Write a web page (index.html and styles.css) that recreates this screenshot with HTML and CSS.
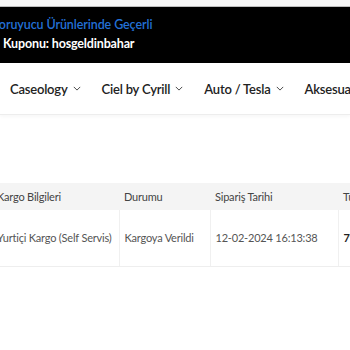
FILE: index.html
```html
<!DOCTYPE html>
<html lang="tr">

    <head>
        <meta charset="UTF-8">
        <meta name="viewport" content="width=device-width, initial-scale=1.0">
        <title>Siparişlerim</title>

        <link rel="stylesheet" href="styles.css">
    </head>

    <body>
        <div class="topstrip"></div>

        <div class="promo">
            <span class="promo-line blue">Koruyucu Ürünlerinde Geçerli</span>
            <span class="promo-line white">Kuponu: hosgeldinbahar</span>
        </div>

        <nav class="menu">
            <a href="#">Caseology <svg class="chev" viewBox="0 0 10 6"><path d="M1 1l4 4 4-4" /></svg></a>
            <a href="#">Ciel by Cyrill <svg class="chev" viewBox="0 0 10 6"><path d="M1 1l4 4 4-4" /></svg></a>
            <a href="#">Auto / Tesla <svg class="chev" viewBox="0 0 10 6"><path d="M1 1l4 4 4-4" /></svg></a>
            <a href="#">Aksesuar</a>
        </nav>

        <main>
            <table class="orders">
                <thead>
                    <tr>
                        <th class="c1">Kargo Bilgileri</th>
                        <th class="c2">Durumu</th>
                        <th class="c3">Sipariş Tarihi</th>
                        <th class="c4">Tutar</th>
                    </tr>
                </thead>
                <tbody>
                    <tr>
                        <td>Yurtiçi Kargo (Self Servis)</td>
                        <td>Kargoya Verildi</td>
                        <td>12-02-2024 16:13:38</td>
                        <td class="price">799,00 TL</td>
                    </tr>
                </tbody>
            </table>
        </main>
    </body>

</html>
```

FILE: styles.css
```css
* {
    box-sizing: border-box;
}

html,
body {
    margin: 0;
    padding: 0;
    width: 100%;
    overflow: hidden;
    background-color: #fff;
    font-family: Lato, 'Open Sans', sans-serif;
}

.topstrip {
    height: 7px;
    background-color: #f7f7f7;
    border-bottom: 1px solid #bdbdbd;
}

.promo {
    height: 56px;
    background-color: #000;
    display: flex;
    flex-direction: column;
    justify-content: center;
    gap: 3px;
    padding-bottom: 2px;
    white-space: nowrap;
}

.promo-line {
    display: block;
    line-height: 16px;
}

.promo-line.blue {
    color: #2370d6;
    font-size: 12.5px;
    font-weight: 600;
    letter-spacing: -0.1px;
    margin-left: -9px;
}

.promo-line.white {
    color: #fff;
    font-size: 12.5px;
    font-weight: 700;
    letter-spacing: -0.15px;
    margin-left: 3px;
}

.menu {
    height: 52px;
    display: flex;
    align-items: center;
    gap: 21px;
    padding-left: 10px;
    white-space: nowrap;
    border-bottom: 1px solid #ededed;
    box-shadow: 0 2px 3px rgba(0, 0, 0, 0.03);
}

.menu a {
    display: flex;
    align-items: center;
    gap: 5px;
    color: #222;
    font-size: 13px;
    font-weight: 600;
    letter-spacing: -0.2px;
    text-decoration: none;
}

.chev {
    width: 8px;
    height: 5px;
    fill: none;
    stroke: #444;
    stroke-width: 1.2;
}

main {
    padding-top: 68px;
}

.orders {
    margin-left: -8px;
    border-collapse: collapse;
    table-layout: fixed;
    width: 480px;
    font-size: 11px;
    letter-spacing: -0.2px;
    white-space: nowrap;
}

.orders th {
    height: 27px;
    background-color: #f4f4f4;
    color: #444;
    font-weight: 400;
    text-align: left;
    padding: 0 5px;
}

.orders td {
    height: 56px;
    color: #555;
    padding: 0 5px;
    border-left: 1px solid #f0f0f0;
    border-bottom: 1px solid #eeeeee;
    overflow: hidden;
}

.orders td:first-child {
    border-left: none;
}

.orders .c1 {
    width: 127px;
}

.orders .c2 {
    width: 91px;
}

.orders .c3 {
    width: 128px;
}

.orders .price {
    color: #222;
    font-weight: 700;
}
```
